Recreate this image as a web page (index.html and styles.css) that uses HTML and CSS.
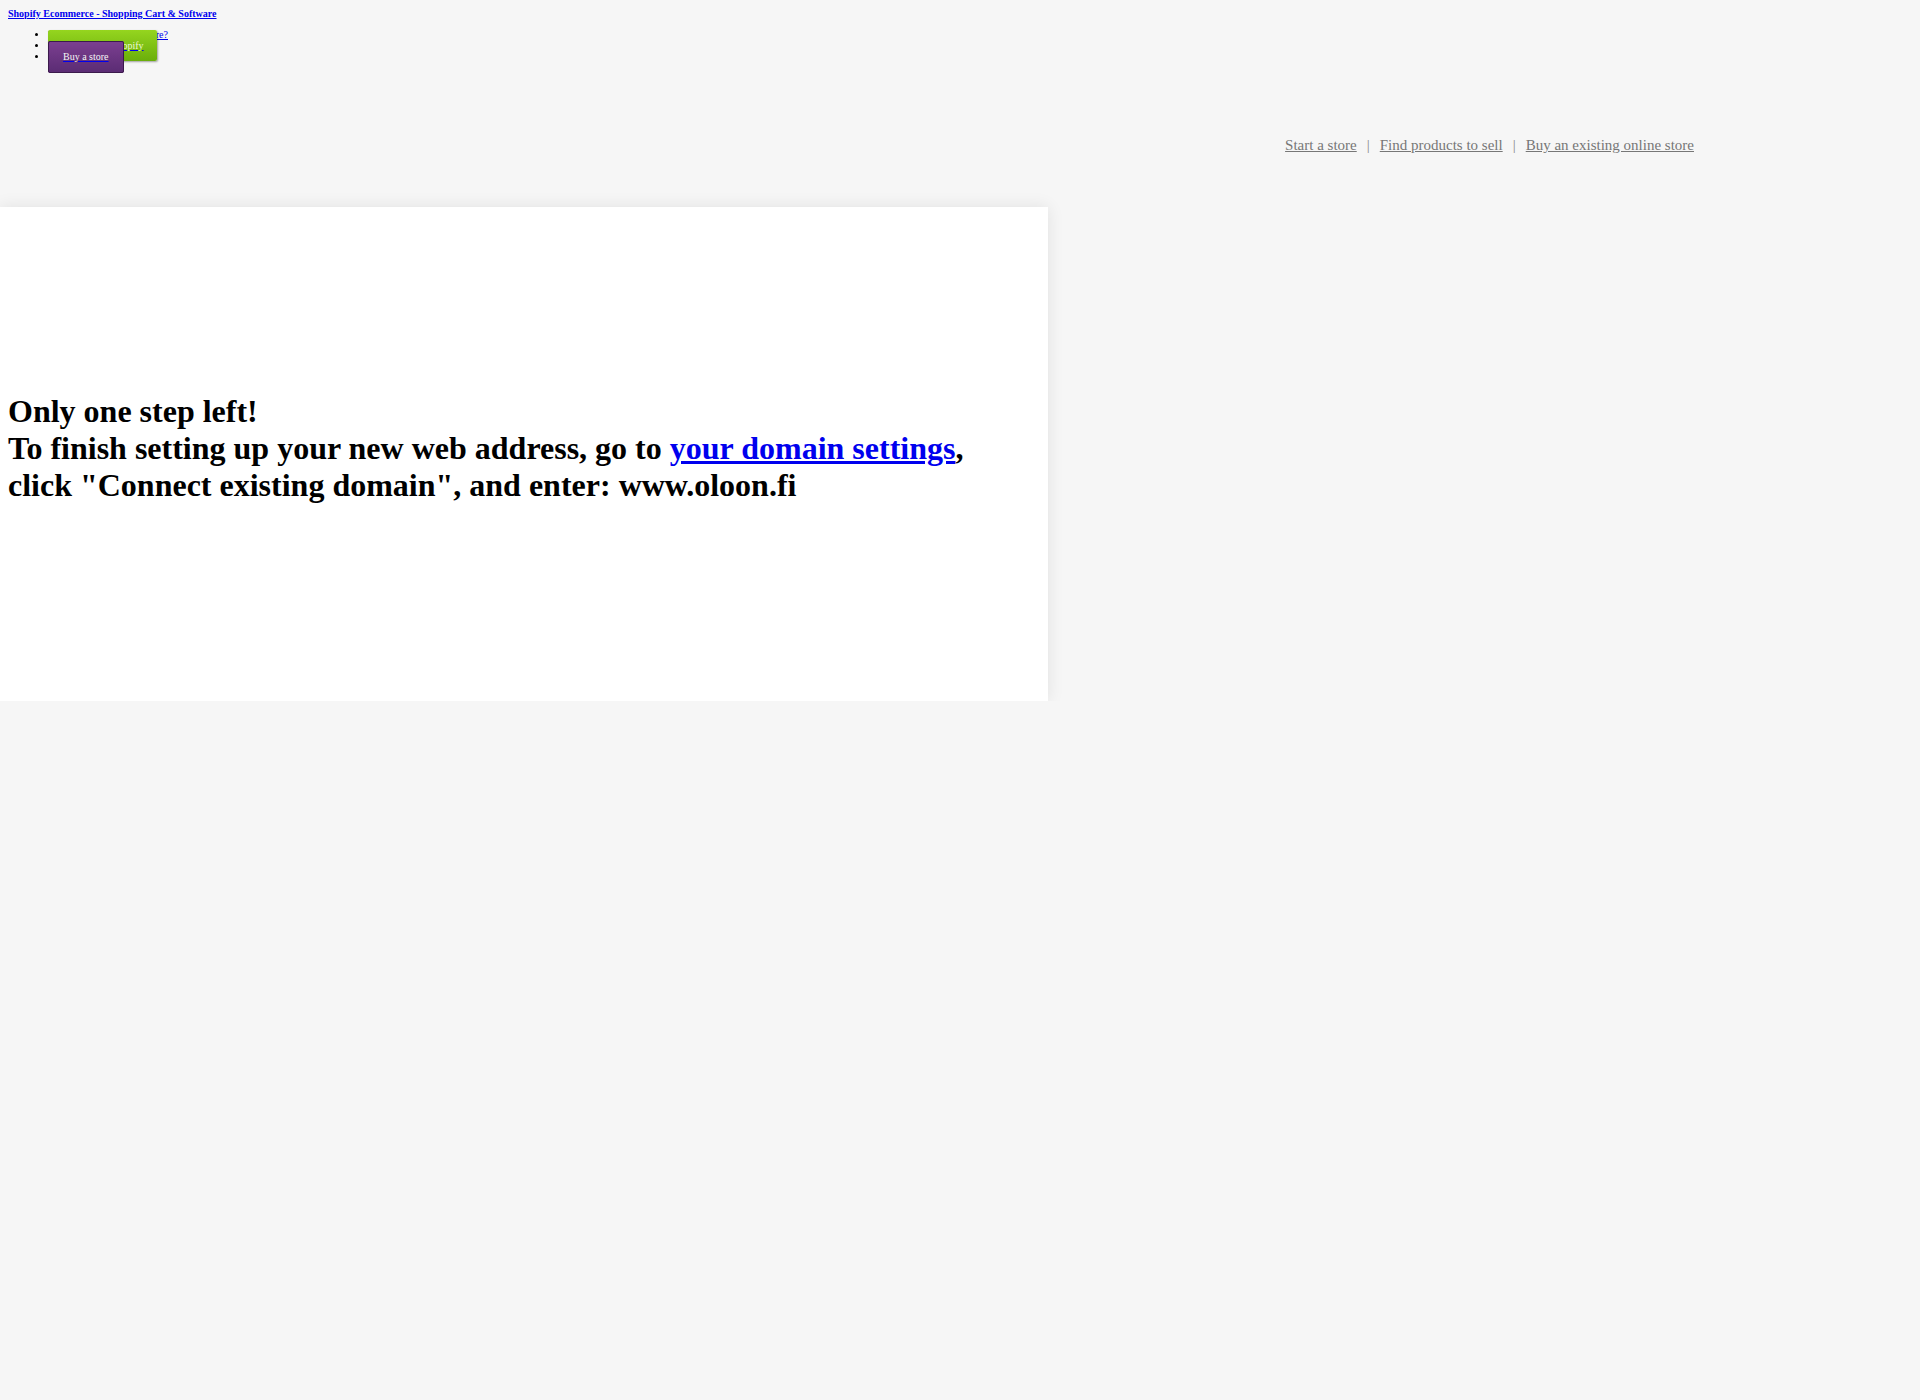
FILE: index.html
```html
<!DOCTYPE html>
<html lang="en">
<head>
<meta charset="utf-8">
<title>Shopify</title>
<link rel="stylesheet" href="styles.css">
</head>
<body>
<header class="top">
  <h1 class="brand"><a href="#">Shopify Ecommerce - Shopping Cart &amp; Software</a></h1>
  <ul class="menu">
    <li><a href="#">Want to open your own store?</a></li>
    <li><a href="#" class="btn btn-green"><span>Create with Shopify</span></a></li>
    <li><a href="#" class="btn btn-purple"><span>Buy a store</span></a></li>
  </ul>
</header>
<nav class="links">
  <a href="#">Start a store</a><span class="sep">|</span><a href="#">Find products to sell</a><span class="sep">|</span><a href="#">Buy an existing online store</a>
</nav>
<main class="panel">
  <h2 class="message">Only one step left!<br>To finish setting up your new web address, go to <a href="#">your domain settings</a>, click "Connect existing domain", and enter: www.oloon.fi</h2>
</main>
</body>
</html>
```
FILE: styles.css
```css
html, body {
  margin: 0;
  padding: 0;
}
body {
  background: #f6f6f6;
  font-family: "Liberation Serif", "Times New Roman", serif;
  color: #000;
}
.top {
  padding: 8px 8px 10px;
}
.brand {
  margin: 0;
  font-size: 10px;
  font-weight: bold;
}
.brand a {
  color: #0000ee;
}
.menu {
  margin: 10px 0 0;
  padding-left: 40px;
  font-size: 10px;
}
.menu a {
  color: #0000ee;
}
.btn {
  padding: 10px 15px;
  border-radius: 2px;
}
.btn span {
  color: #f4f4f4;
}
.btn-green {
  background: linear-gradient(#95d51f, #6aae0b);
  box-shadow: 1px 1px 2px rgba(0, 0, 0, 0.35);
  padding-right: 13px;
}
.btn-green span {
  color: #eef8d8;
}
.btn-purple {
  background: linear-gradient(#7b3f90, #5b2c74);
  border: 1px solid #3b1a4c;
  padding: 9px 14px 10px;
}
.links {
  display: flex;
  justify-content: flex-end;
  padding-right: 226px;
  margin-top: 65px;
  font-size: 15px;
  color: #888;
}
.links a {
  color: #777;
}
.sep {
  padding: 0 10px;
}
.panel {
  margin-top: 53px;
  width: 1048px;
  box-sizing: border-box;
  background: #fff;
  padding: 186px 8px 197px;
  box-shadow: 0 0 16px rgba(0, 0, 0, 0.09);
}
.message {
  margin: 0;
  max-width: 1000px;
  font-size: 32px;
  font-weight: bold;
}
.message a {
  color: #0000ee;
}
```
